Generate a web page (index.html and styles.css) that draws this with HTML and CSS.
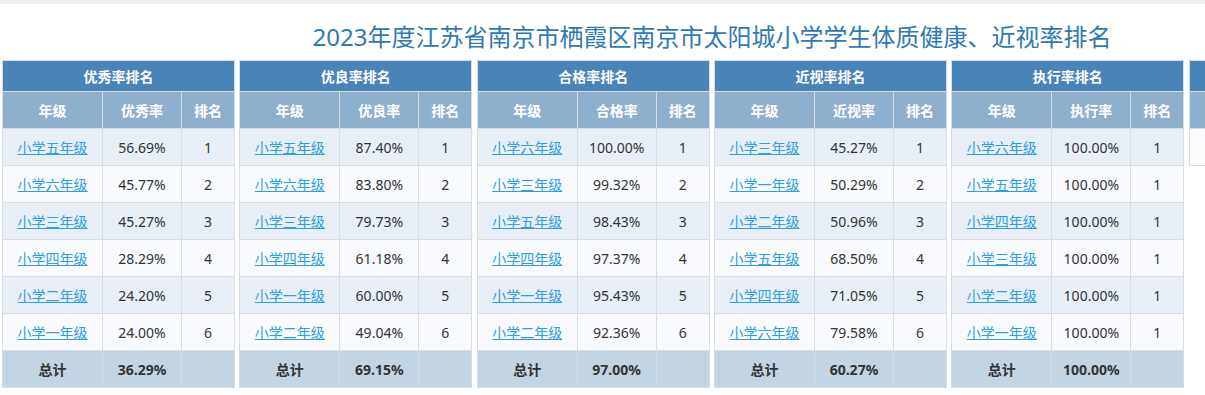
FILE: index.html
```html
<!DOCTYPE html>
<html lang="zh-CN">
<head>
<meta charset="utf-8">
<title>排名</title>
<link rel="stylesheet" href="styles.css">
</head>
<body>
<div class="topbar"></div>
<div class="viewport">
  <div class="page">
    <h1 class="title">2023年度江苏省南京市栖霞区南京市太阳城小学学生体质健康、近视率排名</h1>
    <div class="grid">
      <div class="cell">
        <table class="rank">
          <colgroup><col class="c1"><col class="c2"><col class="c3"></colgroup>
          <thead>
            <tr class="h1"><th colspan="3">优秀率排名</th></tr>
            <tr class="h2"><th>年级</th><th>优秀率</th><th>排名</th></tr>
          </thead>
          <tbody>
            <tr class="odd"><td><a href="#">小学五年级</a></td><td>56.69%</td><td>1</td></tr>
            <tr class="even"><td><a href="#">小学六年级</a></td><td>45.77%</td><td>2</td></tr>
            <tr class="odd"><td><a href="#">小学三年级</a></td><td>45.27%</td><td>3</td></tr>
            <tr class="even"><td><a href="#">小学四年级</a></td><td>28.29%</td><td>4</td></tr>
            <tr class="odd"><td><a href="#">小学二年级</a></td><td>24.20%</td><td>5</td></tr>
            <tr class="even"><td><a href="#">小学一年级</a></td><td>24.00%</td><td>6</td></tr>
            <tr class="total"><td>总计</td><td>36.29%</td><td></td></tr>
          </tbody>
        </table>
      </div>
      <div class="cell">
        <table class="rank">
          <colgroup><col class="c1"><col class="c2"><col class="c3"></colgroup>
          <thead>
            <tr class="h1"><th colspan="3">优良率排名</th></tr>
            <tr class="h2"><th>年级</th><th>优良率</th><th>排名</th></tr>
          </thead>
          <tbody>
            <tr class="odd"><td><a href="#">小学五年级</a></td><td>87.40%</td><td>1</td></tr>
            <tr class="even"><td><a href="#">小学六年级</a></td><td>83.80%</td><td>2</td></tr>
            <tr class="odd"><td><a href="#">小学三年级</a></td><td>79.73%</td><td>3</td></tr>
            <tr class="even"><td><a href="#">小学四年级</a></td><td>61.18%</td><td>4</td></tr>
            <tr class="odd"><td><a href="#">小学一年级</a></td><td>60.00%</td><td>5</td></tr>
            <tr class="even"><td><a href="#">小学二年级</a></td><td>49.04%</td><td>6</td></tr>
            <tr class="total"><td>总计</td><td>69.15%</td><td></td></tr>
          </tbody>
        </table>
      </div>
      <div class="cell">
        <table class="rank">
          <colgroup><col class="c1"><col class="c2"><col class="c3"></colgroup>
          <thead>
            <tr class="h1"><th colspan="3">合格率排名</th></tr>
            <tr class="h2"><th>年级</th><th>合格率</th><th>排名</th></tr>
          </thead>
          <tbody>
            <tr class="odd"><td><a href="#">小学六年级</a></td><td>100.00%</td><td>1</td></tr>
            <tr class="even"><td><a href="#">小学三年级</a></td><td>99.32%</td><td>2</td></tr>
            <tr class="odd"><td><a href="#">小学五年级</a></td><td>98.43%</td><td>3</td></tr>
            <tr class="even"><td><a href="#">小学四年级</a></td><td>97.37%</td><td>4</td></tr>
            <tr class="odd"><td><a href="#">小学一年级</a></td><td>95.43%</td><td>5</td></tr>
            <tr class="even"><td><a href="#">小学二年级</a></td><td>92.36%</td><td>6</td></tr>
            <tr class="total"><td>总计</td><td>97.00%</td><td></td></tr>
          </tbody>
        </table>
      </div>
      <div class="cell">
        <table class="rank">
          <colgroup><col class="c1"><col class="c2"><col class="c3"></colgroup>
          <thead>
            <tr class="h1"><th colspan="3">近视率排名</th></tr>
            <tr class="h2"><th>年级</th><th>近视率</th><th>排名</th></tr>
          </thead>
          <tbody>
            <tr class="odd"><td><a href="#">小学三年级</a></td><td>45.27%</td><td>1</td></tr>
            <tr class="even"><td><a href="#">小学一年级</a></td><td>50.29%</td><td>2</td></tr>
            <tr class="odd"><td><a href="#">小学二年级</a></td><td>50.96%</td><td>3</td></tr>
            <tr class="even"><td><a href="#">小学五年级</a></td><td>68.50%</td><td>4</td></tr>
            <tr class="odd"><td><a href="#">小学四年级</a></td><td>71.05%</td><td>5</td></tr>
            <tr class="even"><td><a href="#">小学六年级</a></td><td>79.58%</td><td>6</td></tr>
            <tr class="total"><td>总计</td><td>60.27%</td><td></td></tr>
          </tbody>
        </table>
      </div>
      <div class="cell">
        <table class="rank">
          <colgroup><col class="c1"><col class="c2"><col class="c3"></colgroup>
          <thead>
            <tr class="h1"><th colspan="3">执行率排名</th></tr>
            <tr class="h2"><th>年级</th><th>执行率</th><th>排名</th></tr>
          </thead>
          <tbody>
            <tr class="odd"><td><a href="#">小学六年级</a></td><td>100.00%</td><td>1</td></tr>
            <tr class="even"><td><a href="#">小学五年级</a></td><td>100.00%</td><td>1</td></tr>
            <tr class="odd"><td><a href="#">小学四年级</a></td><td>100.00%</td><td>1</td></tr>
            <tr class="even"><td><a href="#">小学三年级</a></td><td>100.00%</td><td>1</td></tr>
            <tr class="odd"><td><a href="#">小学二年级</a></td><td>100.00%</td><td>1</td></tr>
            <tr class="even"><td><a href="#">小学一年级</a></td><td>100.00%</td><td>1</td></tr>
            <tr class="total"><td>总计</td><td>100.00%</td><td></td></tr>
          </tbody>
        </table>
      </div>
      <div class="cell">
        <table class="rank">
          <colgroup><col class="c1"><col class="c2"><col class="c3"></colgroup>
          <thead>
            <tr class="h1"><th colspan="3"></th></tr>
            <tr class="h2"><th></th><th></th><th></th></tr>
          </thead>
          <tbody>
            <tr class="blank"><td colspan="3"></td></tr>
          </tbody>
        </table>
      </div>
    </div>
  </div>
</div>
</body>
</html>
```

FILE: styles.css
```css
html, body {
  margin: 0;
  padding: 0;
  background: #ffffff;
}
body {
  font-family: "Noto Sans", "Noto Sans CJK SC", sans-serif;
  color: #333333;
}
.topbar {
  height: 4px;
  background: #efefef;
}
.viewport {
  width: 1205px;
  overflow: hidden;
}
.page {
  width: 1424px;
}
.title {
  margin: 15px 0 6px;
  font-size: 24px;
  font-weight: normal;
  line-height: 35px;
  text-align: center;
  color: #3079b4;
  font-family: "Noto Sans", "Noto Sans CJK SC", sans-serif;
}
.grid {
  display: grid;
  grid-template-columns: repeat(6, 1fr);
}
.cell {
  padding-left: 2px;
}
.rank {
  width: 232px;
  table-layout: fixed;
  border-collapse: collapse;
  font-size: 14px;
  text-align: center;
}
.c1 { width: 100px; }
.c2 { width: 79px; }
.c3 { width: 53px; }
.rank th, .rank td {
  border: 1px solid #d9dde2;
  padding: 0;
}
.rank .h1 th {
  height: 30px;
  background: #4884b7;
  color: #ffffff;
  font-weight: bold;
}
.rank .h2 th {
  height: 36px;
  background: #8eb0cf;
  color: #ffffff;
  font-weight: bold;
}
.rank td {
  height: 36px;
  color: #333333;
}
.rank .odd td { background: #e8eff7; }
.rank .even td { background: #f8fafd; }
.rank .blank td { background: #fbfcfe; }
.rank .total td {
  background: #c3d5e3;
  font-weight: bold;
  color: #333333;
}
.rank a {
  color: #2e9ee2;
  text-decoration: underline;
}
```
